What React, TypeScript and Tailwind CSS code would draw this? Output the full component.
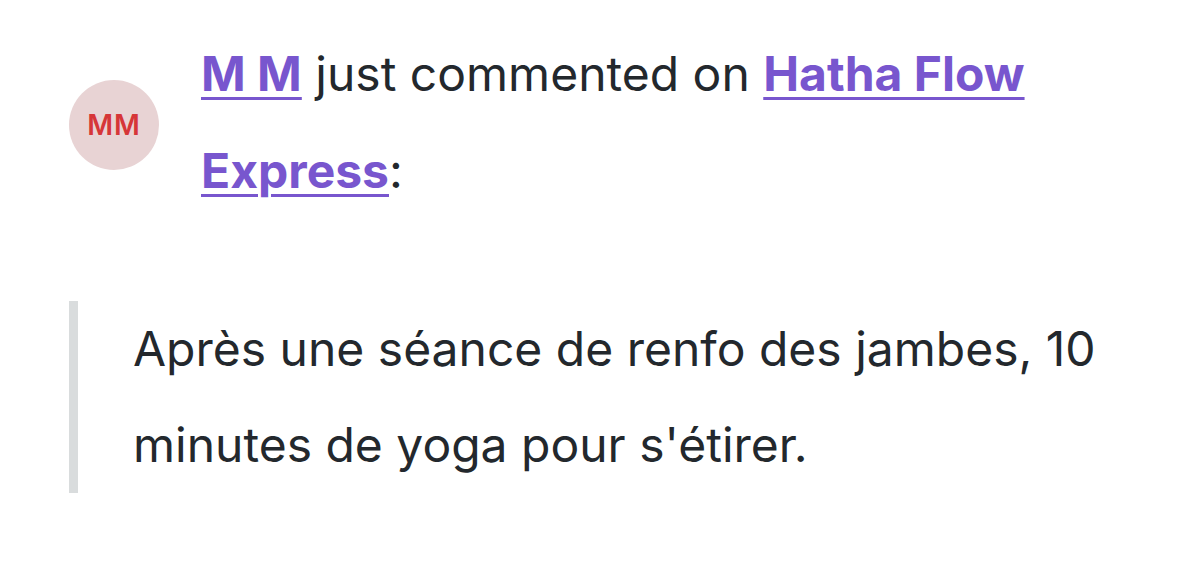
import React from "react";

const Avatar = ({ initials }: { initials: string }) => (
  <div className="w-[90px] h-[90px] mt-[6px] shrink-0 rounded-full bg-[#e8d3d4] flex items-center justify-center">
    <span className="text-[28px] font-semibold tracking-[1px] text-[#d63638]">{initials}</span>
  </div>
);

export default function App() {
  return (
    <div className="min-h-screen bg-white font-['Inter',sans-serif] text-[#23282d]">
      <div className="pl-[69px] pt-[25px] w-[1120px]">
        <div className="flex items-center gap-[42px]">
          <Avatar initials="MM" />
          <p className="text-[48px] leading-[97px] w-[900px]">
            <a href="#" className="font-bold text-[#7856ce] underline underline-offset-[6px] decoration-[3px]">
              M M
            </a>{" "}
            just commented on{" "}
            <a href="#" className="font-bold text-[#7856ce] underline underline-offset-[6px] decoration-[3px]">
              Hatha Flow Express
            </a>
            :
          </p>
        </div>
        <blockquote className="mt-[82px] border-l-[9px] border-[#d9dcdd] pl-[55px]">
          <p className="text-[48px] leading-[96px] w-[980px]">
            Après une séance de renfo des jambes, 10 minutes de yoga pour s'étirer.
          </p>
        </blockquote>
      </div>
    </div>
  );
}
